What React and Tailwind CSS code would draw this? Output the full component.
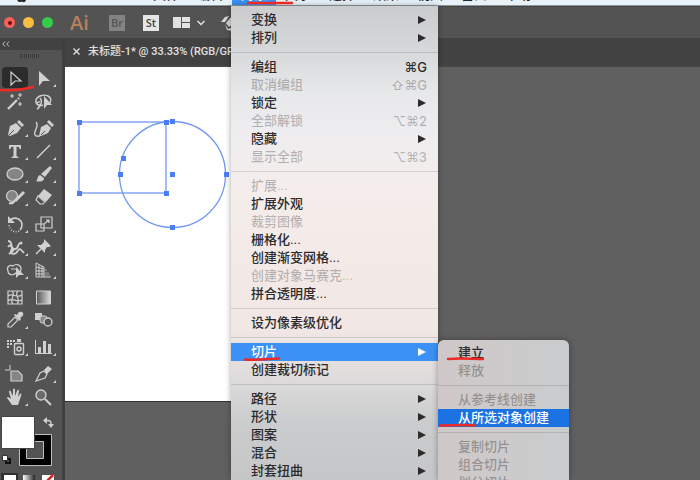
import React from "react";

const menuTitles = ["文件", "编辑", "对象", "文字", "选择", "效果", "视图", "窗口", "帮助"];

const objectMenu = [
  [
    { label: "变换", sub: true },
    { label: "排列", sub: true },
  ],
  [
    { label: "编组", keys: "⌘G" },
    { label: "取消编组", keys: "⇧⌘G", off: true },
    { label: "锁定", sub: true },
    { label: "全部解锁", keys: "⌥⌘2", off: true },
    { label: "隐藏", sub: true },
    { label: "显示全部", keys: "⌥⌘3", off: true },
  ],
  [
    { label: "扩展...", off: true },
    { label: "扩展外观" },
    { label: "裁剪图像", off: true },
    { label: "栅格化..." },
    { label: "创建渐变网格..." },
    { label: "创建对象马赛克...", off: true },
    { label: "拼合透明度..." },
  ],
  [{ label: "设为像素级优化" }],
  [{ label: "切片", sub: true, active: true }, { label: "创建裁切标记" }],
  [
    { label: "路径", sub: true },
    { label: "形状", sub: true },
    { label: "图案", sub: true },
    { label: "混合", sub: true },
    { label: "封套扭曲", sub: true },
  ],
];

const sliceMenu = [
  [{ label: "建立" }, { label: "释放", off: true }],
  [
    { label: "从参考线创建", off: true },
    { label: "从所选对象创建", active: true },
  ],
  [
    { label: "复制切片", off: true },
    { label: "组合切片", off: true },
    { label: "划分切片", off: true },
  ],
];

/* Tool drawings share a 28 x 23 cell. */
const L = "#d0d0d0";
const line = { fill: "none", stroke: L, strokeWidth: 1.4 };

const toolGroups = [
  [
    { name: "选择工具", selected: true, art: <path d="M10 5v13l4-4h6z" {...line} strokeWidth="1.2" /> },
    { name: "直接选择工具", more: true, art: <path d="M10 4v15l4-5h7z" fill={L} /> },
    {
      name: "魔棒工具",
      art: (
        <g stroke={L} fill="none">
          <path d="M7 19l9-9" strokeWidth="2.4" />
          <path d="M17 9l1-1" strokeWidth="2.4" />
          <path d="M11 4v4M9 6h4M19 3v4M17 5h4M19 12v4M17 14h4" strokeWidth="1.2" />
        </g>
      ),
    },
    {
      name: "套索工具",
      art: (
        <g>
          <path d="M14 15c-4 2-8-1-7-5s8-6 12-4 3 6 1 8M11 12c-3-1-4 3-1 3s3-5 1-7M10 15c1 2 0 3-2 4" {...line} />
          <path d="M15 6v13l3-4h5z" fill={L} />
        </g>
      ),
    },
  ],
  [
    {
      name: "钢笔工具",
      more: true,
      art: (
        <g>
          <path d="M7 18l2-9 6-3 5 5-4 5-7 3z" fill={L} />
          <path d="M16 5l2-2 5 5-2 2z" fill={L} />
          <path d="M8 18l5-5" stroke="#535353" />
        </g>
      ),
    },
    {
      name: "曲率工具",
      art: (
        <g>
          <path d="M10 19l2-9 6-3 4 4-3 5-7 3z" fill={L} />
          <path d="M18 5l2-2 5 5-2 2z" fill={L} />
          <path d="M12 18l4-4" stroke="#535353" />
          <path d="M7 5c4 4-3 9-1 13 1 2 3 1 5 1" {...line} />
        </g>
      ),
    },
    {
      name: "文字工具",
      more: true,
      art: <path d="M8 5h12v4h-1.5c0-2-1-2.200-3-2.200v9.500l2 .7v1h-7v-1l2-.7V6.800c-2 0-3 .2-3 2.200H8z" fill={L} />,
    },
    { name: "直线段工具", more: true, art: <path d="M8 18L21 5" {...line} /> },
    {
      name: "椭圆工具",
      more: true,
      art: <ellipse cx="14" cy="11" rx="8" ry="6" fill="#858585" stroke={L} strokeWidth="1.3" />,
    },
    {
      name: "画笔工具",
      more: true,
      art: (
        <g fill={L}>
          <path d="M21 3l2 2-7 9-4-3z" />
          <path d="M11 12l4 3c0 4-5 4-8 3 2-1 1-5 4-6z" />
        </g>
      ),
    },
    {
      name: "Shaper 工具",
      more: true,
      art: (
        <g>
          <circle cx="11" cy="10" r="5.500" fill="#858585" stroke={L} strokeWidth="1.2" />
          <path d="M23 6l-9 9" stroke={L} strokeWidth="3" />
          <path d="M14 14c-1 3-3 4-6 3" {...line} strokeWidth="2" />
        </g>
      ),
    },
    {
      name: "橡皮擦工具",
      more: true,
      art: (
        <g>
          <path d="M15 3l8 6-6 7-8-6z" fill={L} />
          <path d="M9 10l7 6-2 2H11l-4-4z" {...line} strokeWidth="1.2" />
        </g>
      ),
    },
  ],
  [
    {
      name: "旋转工具",
      more: true,
      art: (
        <g>
          <path d="M9 7c5-4 12-1 12 5 0 3-1 4-2 5" {...line} strokeWidth="1.600" />
          <path d="M18 18c-4 2-9 0-10-6" {...line} strokeDasharray="1 1.500" />
          <path d="M7 3v7h7z" fill={L} />
        </g>
      ),
    },
    {
      name: "比例缩放工具",
      more: true,
      art: (
        <g {...line} strokeWidth="1.200">
          <path d="M12 4h11v11H12zM7 11h8v7H7z" />
          <path d="M15 11l5-4M17 7h3v3" />
        </g>
      ),
    },
    {
      name: "宽度工具",
      more: true,
      art: (
        <g>
          <path d="M7 5c6 0 1 7 6 8s3-5 6-6M7 11c3-4 5 1 3 4s4 4 6 1 2-5 7 1M8 18l5-4" {...line} strokeWidth="1.800" />
          <circle cx="20" cy="7" r="1.500" fill={L} />
        </g>
      ),
    },
    {
      name: "操控变形工具",
      more: true,
      art: (
        <g>
          <path d="M15 3l7 7-2 1-2 0-2 3v3l-8-8h4l3-3z" fill={L} />
          <path d="M12 13l-5 5" {...line} />
        </g>
      ),
    },
    {
      name: "形状生成器工具",
      more: true,
      art: (
        <g>
          <path d="M7 12c-2-4 2-7 5-5 3-3 8-1 8 3s-3 5-5 4c-3 3-8 2-8-2zM10 10h7" {...line} strokeWidth="1.200" />
          <path d="M15 8v11l3-3h5z" fill={L} />
        </g>
      ),
    },
    {
      name: "透视网格工具",
      more: true,
      art: (
        <g {...line} strokeWidth="1">
          <path d="M7 4v14h15M7 4l8 4v10M10 6v12M13 7v11M7 8l8 2M7 12h8M7 15h8" />
          <path d="M15 11h3M15 14h5M15 16h6" stroke="#a0a0a0" />
        </g>
      ),
    },
  ],
  [
    {
      name: "网格工具",
      art: (
        <g {...line} strokeWidth="1.200">
          <path d="M7 5h14v13H7zM7 10c5-4 8 3 14-1M7 15c4-4 9 2 14-1M11 5c5 5-4 8 1 13M17 5c-5 5 4 8-1 13" />
        </g>
      ),
    },
    {
      name: "渐变工具",
      art: (
        <g>
          <defs>
            <linearGradient id="toolGradient">
              <stop stopColor="#555" />
              <stop offset="1" stopColor="#ddd" />
            </linearGradient>
          </defs>
          <path d="M7.500 5h14v13h-14z" fill="url(#toolGradient)" stroke={L} />
        </g>
      ),
    },
    {
      name: "吸管工具",
      more: true,
      art: (
        <g>
          <path d="M14 8l3 3-7 7H7v-3z" {...line} strokeWidth="1.200" />
          <path d="M13 6l6 6 1-2-1-1c4-2 4-5 2-6s-4 0-5 3l-2-1z" fill={L} />
        </g>
      ),
    },
    {
      name: "混合工具",
      art: (
        <g>
          <path d="M6 4h7v7H6z" fill={L} />
          <rect x="11" y="7" width="7" height="7" rx="2" fill="#888" stroke={L} />
          <circle cx="19" cy="13" r="4" fill="#535353" stroke={L} strokeWidth="1.300" />
        </g>
      ),
    },
  ],
  [
    {
      name: "符号喷枪工具",
      more: true,
      art: (
        <g>
          <path d="M6 4h2v2H6zM9 4h2v2H9zM12 4h2v2h-2zM6 7h2v2H6zM9 7h2v2H9zM6 10h2v2H6z" fill={L} />
          <path d="M16 3h4v3h-4z" fill={L} />
          <rect x="13.500" y="7.500" width="9" height="11" rx="1" {...line} />
          <circle cx="18" cy="13" r="2" {...line} />
        </g>
      ),
    },
    {
      name: "柱形图工具",
      more: true,
      art: <path d="M6 4h1v13h16v1H6zM9 11h3v6H9zM14 5h3v12h-3zM19 8h3v9h-3z" fill={L} />,
    },
  ],
  [
    {
      name: "画板工具",
      art: (
        <g>
          <path d="M9 2v5M4 7h5" {...line} strokeWidth="1" />
          <path d="M10 8h7l4 4v6H10z" fill="#858585" stroke={L} strokeWidth="1.200" />
        </g>
      ),
    },
    {
      name: "切片工具",
      more: true,
      art: (
        <g>
          <path d="M7 18l4-8 4-2 3 3-2 4z" {...line} strokeWidth="1.200" />
          <path d="M15 7l4-4 4 3-5 5z" fill={L} />
        </g>
      ),
    },
    {
      name: "抓手工具",
      more: true,
      art: (
        <path
          d="M11 19l-5-7c0-2 2-1 4 1L8 6c0-2 2-1 2 0l2 4V4c0-2 2-2 2 0v6l2-5c1-2 2-1 2 0l-1 6 2-3c1-1 2 0 1 2l-3 9z"
          fill={L}
        />
      ),
    },
    {
      name: "缩放工具",
      art: (
        <g {...line}>
          <circle cx="12" cy="9" r="5" fill="#6b6b6b" />
          <path d="M16 13l6 6" strokeWidth="2" />
        </g>
      ),
    },
  ],
];

const anchors = [
  [14, 55], [101, 55], [14, 126], [101, 126], [107, 54],
  [58, 91], [55, 107], [107, 107], [161, 107], [107, 160],
];

function Menu({ groups, className, hot, muted }) {
  return (
    <div role="menu" className={"flex flex-col overflow-hidden text-[13px] leading-[18px] " + className}>
      {groups.map((group, i) => (
        <React.Fragment key={i}>
          {i > 0 && (
            <div role="separator" className="flex h-[11px] shrink-0 items-center">
              <div className="h-px w-full bg-black/12" />
            </div>
          )}
          {group.map((item) => (
            <button
              key={item.label}
              role="menuitem"
              disabled={item.off}
              className={
                "flex h-[18px] w-full shrink-0 items-center justify-between pr-[11px] pl-5 text-left font-medium " +
                (item.active ? hot + " text-white" : item.off ? muted : "text-[#2c2a2b]")
              }
            >
              <span>{item.label}</span>
              {item.keys && (
                <span className="font-['Inter','DejaVu_Sans',sans-serif] text-[13px]">{item.keys}</span>
              )}
              {item.sub && (
                <svg className="mr-px h-2 w-2" viewBox="0 0 8 8" fill="currentColor" aria-hidden="true">
                  <path d="M0 0l8 4-8 4z" />
                </svg>
              )}
            </button>
          ))}
        </React.Fragment>
      ))}
    </div>
  );
}

function Tool({ tool }) {
  return (
    <button aria-label={tool.name} className="relative h-[23px] w-7">
      {tool.selected && <span className="absolute inset-x-px top-0 bottom-0.5 rounded-sm bg-[#2c2c2c]" />}
      <svg className="relative h-[23px] w-7" viewBox="0 0 28 23" aria-hidden="true">
        {tool.art}
        {tool.more && <path d="M27 17v3h-3z" fill={L} />}
      </svg>
    </button>
  );
}

function Toolbox() {
  return (
    <aside className="flex w-[65px] shrink-0 flex-col overflow-hidden border-r-3 border-[#3f3f3f] bg-[#535353]">
      <div className="flex h-3 shrink-0 items-center bg-[#424242] pl-0.5">
        <svg className="h-1.5 w-2" viewBox="0 0 8 6" fill="none" stroke="#c4c4c4" aria-hidden="true">
          <path d="M3 0.500L0.800 3 3 5.500M7 0.500L4.800 3 7 5.500" />
        </svg>
      </div>
      <div className="flex h-[17px] shrink-0 items-start justify-center pt-1 pr-1">
        <svg className="h-1 w-[19px]" viewBox="0 0 19 4" aria-hidden="true">
          <path d="M0 2h19" stroke="#3b3b3b" strokeWidth="4" strokeDasharray="1 1" />
        </svg>
      </div>
      <div className="flex shrink-0 flex-col gap-1 pl-px">
        {toolGroups.map((group, i) => (
          <div key={i} className="grid w-14 grid-cols-2">
            {group.map((tool) => (
              <Tool key={tool.name} tool={tool} />
            ))}
          </div>
        ))}
      </div>
      <svg className="mt-1.5 h-[54px] w-14 shrink-0" viewBox="0 0 56 54" role="img" aria-label="填色和描边">
        <path d="M19.500 19.500h32v31h-32z" fill="#000" stroke="#bdbdbd" />
        <path d="M26.500 26.500h17v17h-17z" fill="#535353" stroke="#bdbdbd" />
        <path d="M1.500 1.500h33v32h-33z" fill="#fff" stroke="#444" />
        <path d="M46 5.500h2q3 0 3 3v2" fill="none" stroke={L} strokeWidth="1.300" />
        <path d="M47 2v7l-4-3.500zM48 9h6l-3 4z" fill={L} />
        <path d="M6 44h4v4H6z" fill="none" stroke="#111" strokeWidth="2" />
        <path d="M2.500 40.500h5v5h-5z" fill="#fff" stroke="#333" />
      </svg>
      <svg className="mt-1 h-3 w-14 shrink-0" viewBox="0 0 56 12" role="img" aria-label="颜色、渐变、无">
        <defs>
          <linearGradient id="paintGradient">
            <stop stopColor="#fff" />
            <stop offset="1" stopColor="#222" />
          </linearGradient>
        </defs>
        <path d="M1 0h17v12H1z" fill="#303030" />
        <path d="M4 2h12v9H4z" fill="#fff" />
        <path d="M23 2h12v9H23z" fill="url(#paintGradient)" />
        <path d="M42 2h12v9H42z" fill="#fff" />
        <path d="M44 11l9-9" stroke="#e02020" strokeWidth="2.500" />
      </svg>
    </aside>
  );
}

export default function App() {
  return (
    <div className="relative flex h-screen flex-col overflow-hidden bg-[#606060] font-['Liberation_Sans','Noto_Sans_CJK_SC',sans-serif]">
      <nav className="flex h-1.5 shrink-0 items-end overflow-hidden border-b border-[#8e9aa0] bg-[#e8f1f8] text-[13px] leading-5 text-[#26292c]">
        <svg className="ml-4 h-4 w-[11px] shrink-0" viewBox="0 0 11 16" aria-hidden="true">
          <path d="M1 3c2-2 3-1 4.500-.5C7 2 9 1 10 3c-2 2-1 5 1 5.500-1 3-2 5.500-4 4.500-1-.4-2-.4-3 0C1 14-1 6 1 3z" fill="#26292c" />
        </svg>
        <span className="w-[117px] shrink-0 pl-4 font-bold whitespace-nowrap">Illustrator CC</span>
        {menuTitles.map((title) => (
          <button
            key={title}
            className={"shrink-0 px-[9px] font-medium " + (title === "对象" ? "bg-[#3b8ff5] text-white" : "")}
          >
            {title}
          </button>
        ))}
      </nav>

      <header className="flex h-8 shrink-0 items-center border-t border-[#444] bg-[#535353] pl-1">
        <div className="flex gap-2">
          <span className="flex h-[11px] w-[11px] items-center justify-center rounded-full bg-[#f4605a]">
            <span className="h-1 w-1 rounded-full bg-[#6d0d0b]" />
          </span>
          <span className="h-[11px] w-[11px] rounded-full bg-[#fbbd40]" />
          <span className="h-[11px] w-[11px] rounded-full bg-[#35cb4b]" />
        </div>
        <span className="ml-[17px] w-[39px] font-['Open_Sans',sans-serif] text-[20px] leading-5 font-semibold text-[#b9805c]">Ai</span>
        <button className="h-4 w-4 bg-[#838383] font-['Open_Sans',sans-serif] text-[11px] leading-4 font-semibold text-[#555]">Br</button>
        <button className="ml-[18px] h-4 w-4 bg-[#e6e6e6] font-['Open_Sans',sans-serif] text-[11px] leading-4 font-semibold text-[#444]">St</button>
        <button aria-label="排列文档" className="ml-3.5">
          <svg className="h-3 w-8" viewBox="0 0 32 12">
            <path d="M0 0h8v11H0zM9 0h8v5H9zM9 6h8v5H9z" fill="#e2e2e2" />
            <path d="M24.500 4l3.500 3.500L31.500 4" fill="none" stroke="#e2e2e2" strokeWidth="1.500" />
          </svg>
        </button>
        <button aria-label="GPU 性能" className="ml-4">
          <svg className="h-4 w-4" viewBox="0 0 16 16" fill="#d8d8d8">
            <path d="M0 7l4-5 4-1-4 6zM5 8l6-7 5-1-1 6-7 6zM4 9l3 5 3-1 1 3-5-1z" />
          </svg>
        </button>
      </header>

      <div className="flex min-h-0 flex-1">
        <Toolbox />
        <main className="flex min-w-0 flex-1 flex-col">
          <div className="flex h-[29px] shrink-0 items-center border-b-2 border-[#464646] bg-[#424242] text-[#e0e0e0]">
            <button aria-label="关闭文档" className="ml-2">
              <svg className="h-[7px] w-[7px]" viewBox="0 0 7 7" stroke="currentColor" strokeWidth="1.400">
                <path d="M0.500 0.500l6 6M6.500 0.500l-6 6" />
              </svg>
            </button>
            <span className="ml-2 text-[11px] leading-4 font-medium whitespace-nowrap font-['Roboto','Noto_Sans_CJK_SC',sans-serif]">
              未标题-1* @ 33.33% (RGB/GPU 预览)
            </span>
          </div>
          <div className="min-h-0 flex-1 overflow-hidden bg-[#606060]">
            <div className="h-[335px] w-1/2 border-b border-[#333] bg-white">
              <svg className="h-[200px] w-[200px]" viewBox="0 0 200 200" role="img" aria-label="矩形与圆形">
                <g fill="none" stroke="#7298f5" strokeWidth="1.300">
                  <rect x="14" y="55" width="87" height="71" />
                  <circle cx="107.500" cy="107.500" r="53" />
                </g>
                {anchors.map(([x, y]) => (
                  <rect key={x + "-" + y} x={x - 2} y={y - 2} width="5" height="5" fill="#4b7df6" />
                ))}
              </svg>
            </div>
          </div>
        </main>
      </div>

      <Menu
        groups={objectMenu}
        hot="bg-[#3b91f6]"
        muted="text-black/25"
        className="absolute top-1.5 bottom-0 left-[231px] w-[207px] bg-[linear-gradient(to_bottom,#cbccce_0%,#d6d7d9_9%,#e7e8ea_18%,#efedef_28%,#f5edeb_40%,#f1e7e5_68%,#dfdcdc_78%,#cacccd_88%,#c4c6c8_100%)] pt-[5px] shadow-[0_0_6px_rgba(0,0,0,0.35)]"
      />
      <Menu
        groups={sliceMenu}
        hot="bg-[#1b73e3]"
        muted="text-black/30"
        className="absolute top-[340px] bottom-0 left-[438px] w-[131px] rounded-t-md bg-linear-to-r from-[#d0c8c8] to-[#c9ccce] pt-1 shadow-[0_0_6px_rgba(0,0,0,0.35)]"
      />

      <svg
        className="pointer-events-none absolute top-0 left-0 h-[480px] w-[700px]"
        viewBox="0 0 700 480"
        fill="none"
        stroke="#ee2a24"
        strokeWidth="2.500"
        strokeLinecap="round"
        aria-hidden="true"
      >
        <path d="M0 90c12 1 22 0 33-3M248 3h44M245 359.500c12 1 22-1 34-1M448 359c12-1 24 0 35 0M440 425.500c12 0 24-1 35 0" />
      </svg>
    </div>
  );
}
